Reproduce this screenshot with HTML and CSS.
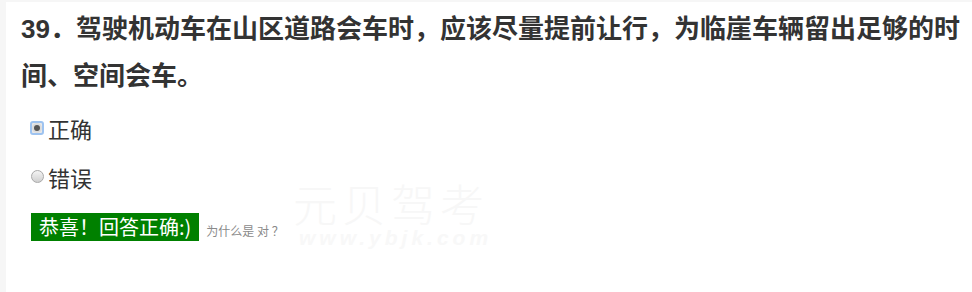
FILE: index.html
```html
<!DOCTYPE html>
<html lang="zh-CN">
<head>
<meta charset="utf-8">
<title>题目</title>
<link rel="stylesheet" href="styles.css">
</head>
<body>
<div class="panel">
  <h1 class="question">39．驾驶机动车在山区道路会车时，应该尽量提前让行，为临崖车辆留出足够的时间、空间会车。</h1>
  <ul class="options">
    <li class="option"><span class="radio checked"><span class="dot"></span></span><span class="label">正确</span></li>
    <li class="option"><span class="radio"></span><span class="label">错误</span></li>
  </ul>
  <div class="result">
    <span class="ok">恭喜！回答正确:)</span>
    <span class="why">为什么是 对 ？</span>
  </div>
  <div class="watermark">
    <div class="wm-cn">元贝驾考</div>
    <div class="wm-en">www.ybjk.com</div>
  </div>
</div>
</body>
</html>
```
FILE: styles.css
```css
html, body {
  margin: 0;
  padding: 0;
  height: 100%;
}
body {
  background: #f6f6f6;
  font-family: "Liberation Sans", "Noto Sans CJK SC", sans-serif;
  color: #333;
}
.panel {
  position: relative;
  margin: 2px 0 0 6px;
  background: #fff;
  min-height: 290px;
  padding: 4px 8px 0 15px;
  box-sizing: border-box;
}
.question {
  margin: 0;
  font-size: 26px;
  font-weight: bold;
  line-height: 47px;
  color: #333;
  font-family: "Liberation Sans", "Noto Sans CJK SC", sans-serif;
}
.options {
  list-style: none;
  margin: 3px 0 0 0;
  padding: 0 0 0 9px;
}
.option {
  display: flex;
  align-items: center;
  height: 49px;
  font-size: 22px;
  color: #333;
}
.label {
  margin-left: 4px;
  font-family: "Noto Sans CJK SC", sans-serif;
}
.radio {
  width: 11px;
  height: 11px;
  border-radius: 50%;
  border: 1px solid #a9a9a9;
  background: linear-gradient(#f4f4f4, #d0d0d0);
  display: flex;
  align-items: center;
  justify-content: center;
  margin-left: 1px;
}
.radio.checked {
  border-radius: 3px;
  border: 2px solid #9ec3f0;
  width: 10px;
  height: 10px;
  background: #e9e9e9;
  margin-left: 0;
}
.dot {
  width: 6px;
  height: 6px;
  border-radius: 50%;
  background: #555;
  box-shadow: 0 0 0 2px #dcdcdc;
}
.result {
  display: flex;
  align-items: flex-end;
  margin: 12px 0 0 10px;
}
.ok {
  background: #008000;
  color: #fff;
  font-size: 20px;
  line-height: 28px;
  height: 28px;
  padding: 0 8px 0 8px;
  font-family: "Noto Sans CJK SC", sans-serif;
}
.why {
  font-size: 12px;
  color: #8a8a8a;
  margin-left: 7px;
  line-height: 16px;
  margin-bottom: 2px;
  font-family: "Noto Sans CJK SC", sans-serif;
}
.watermark {
  position: absolute;
  left: 287px;
  top: 178px;
  pointer-events: none;
}
.wm-cn {
  font-family: "Noto Sans CJK SC", sans-serif;
  font-size: 44px;
  line-height: 46px;
  letter-spacing: 5px;
  color: #f7f7f7;
  font-weight: 300;
}
.wm-en {
  font-family: "Liberation Sans", sans-serif;
  font-style: italic;
  font-weight: bold;
  font-size: 21px;
  letter-spacing: 4px;
  line-height: 20px;
  margin-top: 2px;
  color: #f8f8f8;
  margin-left: 6px;
}
```
